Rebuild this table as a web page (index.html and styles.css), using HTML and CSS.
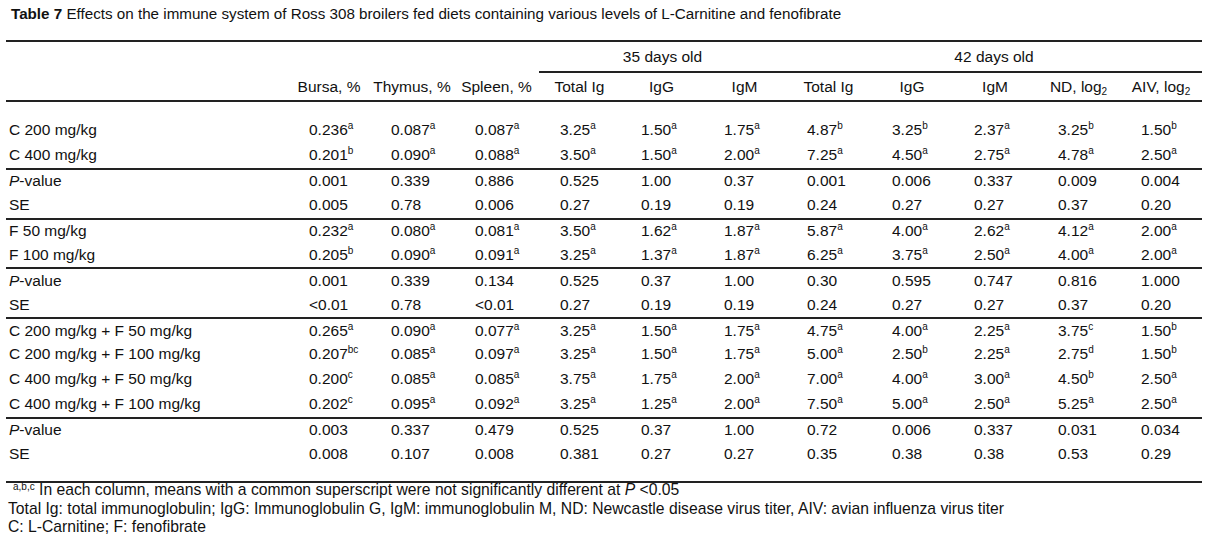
FILE: index.html
```html
<!DOCTYPE html>
<html lang="en">
<head>
<meta charset="utf-8">
<title>Table 7</title>
<link rel="stylesheet" href="styles.css">
</head>
<body>
<p class="caption"><b>Table 7</b> Effects on the immune system of Ross 308 broilers fed diets containing various levels of L-Carnitine and fenofibrate</p>
<div class="table">
  <div class="thead">
    <div class="row hrow1">
      <div class="hspan span35">35 days old</div>
      <div class="hspan span42">42 days old</div>
    </div>
    <div class="row hrow2">
      <div class="hc"></div>
      <div class="hc">Bursa, %</div>
      <div class="hc">Thymus, %</div>
      <div class="hc">Spleen, %</div>
      <div class="hc">Total Ig</div>
      <div class="hc">IgG</div>
      <div class="hc">IgM</div>
      <div class="hc">Total Ig</div>
      <div class="hc">IgG</div>
      <div class="hc">IgM</div>
      <div class="hc">ND, log<sub class="sb">2</sub></div>
      <div class="hc">AIV, log<sub class="sb">2</sub></div>
    </div>
  </div>
  <div class="tbody">
    <div class="row">
      <div class="lc">C 200 mg/kg</div>
      <div class="vc">0.236<sup class="sp">a</sup></div><div class="vc">0.087<sup class="sp">a</sup></div><div class="vc">0.087<sup class="sp">a</sup></div>
      <div class="vc">3.25<sup class="sp">a</sup></div><div class="vc">1.50<sup class="sp">a</sup></div><div class="vc">1.75<sup class="sp">a</sup></div>
      <div class="vc">4.87<sup class="sp">b</sup></div><div class="vc">3.25<sup class="sp">b</sup></div><div class="vc">2.37<sup class="sp">a</sup></div><div class="vc">3.25<sup class="sp">b</sup></div><div class="vc">1.50<sup class="sp">b</sup></div>
    </div>
    <div class="row">
      <div class="lc">C 400 mg/kg</div>
      <div class="vc">0.201<sup class="sp">b</sup></div><div class="vc">0.090<sup class="sp">a</sup></div><div class="vc">0.088<sup class="sp">a</sup></div>
      <div class="vc">3.50<sup class="sp">a</sup></div><div class="vc">1.50<sup class="sp">a</sup></div><div class="vc">2.00<sup class="sp">a</sup></div>
      <div class="vc">7.25<sup class="sp">a</sup></div><div class="vc">4.50<sup class="sp">a</sup></div><div class="vc">2.75<sup class="sp">a</sup></div><div class="vc">4.78<sup class="sp">a</sup></div><div class="vc">2.50<sup class="sp">a</sup></div>
    </div>
    <div class="row grp">
      <div class="lc"><i>P</i>-value</div>
      <div class="vc">0.001</div><div class="vc">0.339</div><div class="vc">0.886</div>
      <div class="vc">0.525</div><div class="vc">1.00</div><div class="vc">0.37</div>
      <div class="vc">0.001</div><div class="vc">0.006</div><div class="vc">0.337</div><div class="vc">0.009</div><div class="vc">0.004</div>
    </div>
    <div class="row">
      <div class="lc">SE</div>
      <div class="vc">0.005</div><div class="vc">0.78</div><div class="vc">0.006</div>
      <div class="vc">0.27</div><div class="vc">0.19</div><div class="vc">0.19</div>
      <div class="vc">0.24</div><div class="vc">0.27</div><div class="vc">0.27</div><div class="vc">0.37</div><div class="vc">0.20</div>
    </div>
    <div class="row grp">
      <div class="lc">F 50 mg/kg</div>
      <div class="vc">0.232<sup class="sp">a</sup></div><div class="vc">0.080<sup class="sp">a</sup></div><div class="vc">0.081<sup class="sp">a</sup></div>
      <div class="vc">3.50<sup class="sp">a</sup></div><div class="vc">1.62<sup class="sp">a</sup></div><div class="vc">1.87<sup class="sp">a</sup></div>
      <div class="vc">5.87<sup class="sp">a</sup></div><div class="vc">4.00<sup class="sp">a</sup></div><div class="vc">2.62<sup class="sp">a</sup></div><div class="vc">4.12<sup class="sp">a</sup></div><div class="vc">2.00<sup class="sp">a</sup></div>
    </div>
    <div class="row">
      <div class="lc">F 100 mg/kg</div>
      <div class="vc">0.205<sup class="sp">b</sup></div><div class="vc">0.090<sup class="sp">a</sup></div><div class="vc">0.091<sup class="sp">a</sup></div>
      <div class="vc">3.25<sup class="sp">a</sup></div><div class="vc">1.37<sup class="sp">a</sup></div><div class="vc">1.87<sup class="sp">a</sup></div>
      <div class="vc">6.25<sup class="sp">a</sup></div><div class="vc">3.75<sup class="sp">a</sup></div><div class="vc">2.50<sup class="sp">a</sup></div><div class="vc">4.00<sup class="sp">a</sup></div><div class="vc">2.00<sup class="sp">a</sup></div>
    </div>
    <div class="row grp">
      <div class="lc"><i>P</i>-value</div>
      <div class="vc">0.001</div><div class="vc">0.339</div><div class="vc">0.134</div>
      <div class="vc">0.525</div><div class="vc">0.37</div><div class="vc">1.00</div>
      <div class="vc">0.30</div><div class="vc">0.595</div><div class="vc">0.747</div><div class="vc">0.816</div><div class="vc">1.000</div>
    </div>
    <div class="row">
      <div class="lc">SE</div>
      <div class="vc">&lt;0.01</div><div class="vc">0.78</div><div class="vc">&lt;0.01</div>
      <div class="vc">0.27</div><div class="vc">0.19</div><div class="vc">0.19</div>
      <div class="vc">0.24</div><div class="vc">0.27</div><div class="vc">0.27</div><div class="vc">0.37</div><div class="vc">0.20</div>
    </div>
    <div class="row grp">
      <div class="lc">C 200 mg/kg + F 50 mg/kg</div>
      <div class="vc">0.265<sup class="sp">a</sup></div><div class="vc">0.090<sup class="sp">a</sup></div><div class="vc">0.077<sup class="sp">a</sup></div>
      <div class="vc">3.25<sup class="sp">a</sup></div><div class="vc">1.50<sup class="sp">a</sup></div><div class="vc">1.75<sup class="sp">a</sup></div>
      <div class="vc">4.75<sup class="sp">a</sup></div><div class="vc">4.00<sup class="sp">a</sup></div><div class="vc">2.25<sup class="sp">a</sup></div><div class="vc">3.75<sup class="sp">c</sup></div><div class="vc">1.50<sup class="sp">b</sup></div>
    </div>
    <div class="row">
      <div class="lc">C 200 mg/kg + F 100 mg/kg</div>
      <div class="vc">0.207<sup class="sp">bc</sup></div><div class="vc">0.085<sup class="sp">a</sup></div><div class="vc">0.097<sup class="sp">a</sup></div>
      <div class="vc">3.25<sup class="sp">a</sup></div><div class="vc">1.50<sup class="sp">a</sup></div><div class="vc">1.75<sup class="sp">a</sup></div>
      <div class="vc">5.00<sup class="sp">a</sup></div><div class="vc">2.50<sup class="sp">b</sup></div><div class="vc">2.25<sup class="sp">a</sup></div><div class="vc">2.75<sup class="sp">d</sup></div><div class="vc">1.50<sup class="sp">b</sup></div>
    </div>
    <div class="row">
      <div class="lc">C 400 mg/kg + F 50 mg/kg</div>
      <div class="vc">0.200<sup class="sp">c</sup></div><div class="vc">0.085<sup class="sp">a</sup></div><div class="vc">0.085<sup class="sp">a</sup></div>
      <div class="vc">3.75<sup class="sp">a</sup></div><div class="vc">1.75<sup class="sp">a</sup></div><div class="vc">2.00<sup class="sp">a</sup></div>
      <div class="vc">7.00<sup class="sp">a</sup></div><div class="vc">4.00<sup class="sp">a</sup></div><div class="vc">3.00<sup class="sp">a</sup></div><div class="vc">4.50<sup class="sp">b</sup></div><div class="vc">2.50<sup class="sp">a</sup></div>
    </div>
    <div class="row">
      <div class="lc">C 400 mg/kg + F 100 mg/kg</div>
      <div class="vc">0.202<sup class="sp">c</sup></div><div class="vc">0.095<sup class="sp">a</sup></div><div class="vc">0.092<sup class="sp">a</sup></div>
      <div class="vc">3.25<sup class="sp">a</sup></div><div class="vc">1.25<sup class="sp">a</sup></div><div class="vc">2.00<sup class="sp">a</sup></div>
      <div class="vc">7.50<sup class="sp">a</sup></div><div class="vc">5.00<sup class="sp">a</sup></div><div class="vc">2.50<sup class="sp">a</sup></div><div class="vc">5.25<sup class="sp">a</sup></div><div class="vc">2.50<sup class="sp">a</sup></div>
    </div>
    <div class="row grp">
      <div class="lc"><i>P</i>-value</div>
      <div class="vc">0.003</div><div class="vc">0.337</div><div class="vc">0.479</div>
      <div class="vc">0.525</div><div class="vc">0.37</div><div class="vc">1.00</div>
      <div class="vc">0.72</div><div class="vc">0.006</div><div class="vc">0.337</div><div class="vc">0.031</div><div class="vc">0.034</div>
    </div>
    <div class="row">
      <div class="lc">SE</div>
      <div class="vc">0.008</div><div class="vc">0.107</div><div class="vc">0.008</div>
      <div class="vc">0.381</div><div class="vc">0.27</div><div class="vc">0.27</div>
      <div class="vc">0.35</div><div class="vc">0.38</div><div class="vc">0.38</div><div class="vc">0.53</div><div class="vc">0.29</div>
    </div>
  </div>
  <div class="notes">
    <p class="note"><sup class="nsp">a,b,c</sup> In each column, means with a common superscript were not significantly different at <i>P</i> &lt;0.05</p>
    <p class="note">Total Ig: total immunoglobulin; IgG: Immunoglobulin G, IgM: immunoglobulin M, ND: Newcastle disease virus titer, AIV: avian influenza virus titer</p>
    <p class="note">C: L-Carnitine; F: fenofibrate</p>
  </div>
</div>
</body>
</html>
```

FILE: styles.css
```css
html, body {
  margin: 0;
  padding: 0;
  background: #ffffff;
}

body {
  font-family: "Liberation Sans", Arial, sans-serif;
  font-size: 15.5px;
  color: #111111;
}

.caption {
  margin: 0;
  padding-left: 11px;
  height: 40px;
  line-height: 28px;
  font-size: 15.2px;
  white-space: nowrap;
}

.caption b {
  font-weight: bold;
}

.table {
  margin-left: 6px;
  width: 1196px;
}

.row {
  display: grid;
  grid-template-columns: 282px 82px 84px 85px 81px 83px 83px 85px 82px 84px 83px 82px;
  align-items: center;
}

.thead {
  border-top: 2px solid #222222;
  border-bottom: 2px solid #222222;
}

.hrow1 {
  height: 31px;
  align-items: stretch;
}

.hspan {
  box-sizing: border-box;
  border-bottom: 2px solid #222222;
  display: flex;
  align-items: center;
  justify-content: center;
}

.span35 {
  grid-column: 5 / 8;
}

.span42 {
  grid-column: 8 / 13;
}

.hrow2 {
  height: 27px;
}

.hc {
  text-align: center;
  white-space: nowrap;
  line-height: 18px;
}

.tbody {
  padding-top: 16px;
  padding-bottom: 15px;
  border-bottom: 2px solid #222222;
}

.tbody .row {
  box-sizing: border-box;
  height: 24.9px;
}

.tbody .grp {
  border-top: 2px solid #222222;
}

.lc {
  padding-left: 3px;
  white-space: nowrap;
  line-height: 18px;
}

.vc {
  padding-left: 21px;
  white-space: nowrap;
  line-height: 18px;
}

.sp {
  font-size: 10px;
  line-height: 0;
  vertical-align: 6px;
}

.sb {
  font-size: 10px;
  line-height: 0;
  vertical-align: -3px;
}

.notes {
  margin-top: -2px;
  padding-left: 2px;
  font-size: 15.7px;
}

.note {
  margin: 0;
  line-height: 18.5px;
  white-space: nowrap;
}

.nsp {
  font-size: 10px;
  line-height: 0;
  vertical-align: 5px;
  padding-left: 5px;
}
```
